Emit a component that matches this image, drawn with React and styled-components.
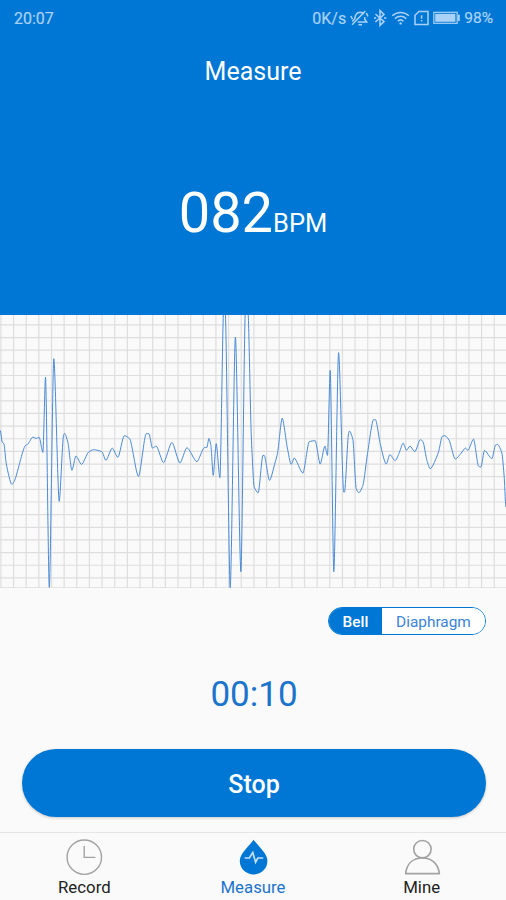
import { useState } from "react";
import styled, { createGlobalStyle } from "styled-components";

const BLUE = "#0077d5";

const GlobalStyle = createGlobalStyle`
  * {
    box-sizing: border-box;
  }
  body {
    margin: 0;
    background: #fafafa;
    font-family: Roboto, sans-serif;
  }
  button {
    font-family: inherit;
    border: none;
    padding: 0;
    background: none;
  }
  svg {
    display: block;
  }
`;

// [x, y] samples of the sound wave, in chart pixels
const SAMPLES = [
  [0, 115], [2, 126.7], [3.7, 128.3], [6, 148], [11.7, 169], [14, 166], [25.3, 130],
  [27.3, 129], [32.7, 121.7], [36, 123], [39, 122], [42.7, 137], [45.3, 61.7],
  [49.1, 272], [53.6, 43.3], [59, 186], [63.3, 120], [64.3, 118], [67.7, 127],
  [71.7, 155], [75.7, 140.7], [81.3, 149], [88.3, 136.7], [93.3, 134.3],
  [101.7, 136.3], [105.7, 145], [112, 132.7], [117.7, 142], [124, 120.3],
  [129.3, 123], [138.3, 161], [146, 118.3], [148.7, 118.3], [152.3, 132.7],
  [156, 130.7], [163.3, 147.3], [171.7, 127], [179.7, 147.7], [186.7, 132.3],
  [196.7, 146.3], [204, 132.3], [206.7, 132], [208.7, 123], [210.7, 130],
  [213, 160], [216, 128.3], [219.7, 162.3], [223.5, -8], [224.9, -8],
  [230, 272.3], [235.2, 21.7], [240.7, 256.3], [245.3, -8], [247.6, -8],
  [251, 118], [254, 171.7], [258, 177.3], [262.7, 140], [264, 140], [269.3, 165],
  [275, 146.7], [277.3, 138], [282, 102.7], [287, 131.7], [291, 149],
  [294, 142.7], [302.7, 157.7], [309, 126.3], [315, 125.3], [320, 148.7],
  [324.7, 130.7], [327.3, 140], [330, 55], [333.6, 256.3], [338.4, 37.3],
  [343.5, 176.7], [344.3, 176.7], [348.3, 118.3], [349.3, 115.7],
  [352.7, 124.3], [356, 173.3], [358.7, 177.3], [362.7, 170], [367.3, 138.3],
  [373.3, 104.3], [375.3, 104.3], [380, 128.3], [386, 148.7], [389.7, 139.3],
  [395, 145.3], [398.7, 138.3], [403, 127.7], [406.3, 135], [409.7, 130.7],
  [414.7, 136.3], [420, 124.3], [422.7, 126], [426.7, 145], [430, 153.3],
  [438.3, 136.7], [442, 121], [444.7, 120.3], [449, 125], [455, 143.7],
  [461, 137.7], [465.3, 132.7], [467.7, 135], [473.3, 123.7], [478.3, 150.7],
  [480.7, 151.7], [484.3, 135], [491.7, 143.3], [495.3, 129.7], [497.3, 129],
  [501.7, 137.7], [504, 161.7], [505.7, 191.7],
];

// smooth curve that never overshoots a sample
const toPath = (points) => {
  const slope = (a, b) => (b[1] - a[1]) / (b[0] - a[0]);
  const tangents = points.map((p, i) => {
    if (i === 0 || i === points.length - 1) return 0;
    const left = slope(points[i - 1], p);
    const right = slope(p, points[i + 1]);
    return left * right <= 0 ? 0 : (2 * left * right) / (left + right);
  });
  return points.reduce((path, [x, y], i) => {
    if (i === 0) return `M${x} ${y}`;
    const [px, py] = points[i - 1];
    const h = (x - px) / 4;
    return `${path}C${px + h} ${py + tangents[i - 1] * h} ${x - h} ${y - tangents[i] * h} ${x} ${y}`;
  }, "");
};

const GRID = 12.65;
const columns = Array.from({ length: 40 }, (_, i) => 0.9 + i * GRID);
const rows = Array.from({ length: 21 }, (_, i) => 9.9 + i * GRID);

const WaveChart = () => (
  <Chart viewBox="0 0 506 273">
    <g stroke="#dedede" strokeWidth="1.2">
      {columns.map((x) => (
        <line key={x} x1={x} x2={x} y1="0" y2="273" />
      ))}
      {rows.map((y) => (
        <line key={y} x1="0" x2="506" y1={y} y2={y} />
      ))}
      <line x1="0" x2="506" y1="272.8" y2="272.8" />
    </g>
    <path d={toPath(SAMPLES)} fill="none" stroke="#4a8ad6" strokeWidth="1" transform="translate(0.2 0.4)" />
  </Chart>
);

const StatusIcons = () => (
  <StatusSvg viewBox="0 0 118 20">
    {/* muted bell */}
    <g transform="translate(3.5 -0.4)">
      <path d="M2.8 13.8L5.4 11C5.6 7 7.4 4.8 10.6 4.6C12.4 4.6 13.6 5.4 14.4 6.6M15.2 9.4V11.6L17.2 14.4H8.2M9 17.2H12.6M2.6 17.2L15.8 3.4M1.2 8.4L3 11.6M16.8 5.6L18.4 8.8" />
    </g>
    {/* bluetooth */}
    <path d="M29.4 6L38 13.6L34 17.4V2.6L38 6.4L29.4 14M28 10H30.2M38 10H40.4" />
    {/* wifi */}
    <path d="M46.3 7.8C51 3.4 58.2 3.4 62.9 7.8M49 10.6C52.3 7.6 56.9 7.6 60.2 10.6M51.7 13.2C53.6 11.5 55.6 11.5 57.5 13.2" />
    <circle cx="54.6" cy="15.4" r="1.2" fill="currentColor" stroke="none" />
    {/* sim card */}
    <path d="M73 3.4H82V16.6H69V7.2ZM75.6 7.2V10.8M75.6 12V13.6" />
    {/* battery */}
    <rect x="87.8" y="4.3" width="23.4" height="11" strokeWidth="1.2" />
    <rect x="89.2" y="5.8" width="20.2" height="8" fill="currentColor" stroke="none" />
    <path d="M112.8 6.6V13" strokeWidth="2" />
  </StatusSvg>
);

const ClockIcon = () => (
  <svg width="38" height="38" viewBox="0 0 38 38" fill="none" stroke="#a2a2a2" strokeWidth="1.4">
    <circle cx="19.3" cy="19.2" r="17.2" />
    <path d="M19.2 8V19.4H30.4" />
  </svg>
);

const DropIcon = () => (
  <svg width="38" height="38" viewBox="0 0 38 38">
    <path
      d="M19.6 1.8C21.2 4.2 24.8 7.6 28.4 12.3C31.6 16.3 33.4 19.5 33.4 23C33.4 30.4 27.4 36.4 19.6 36.4C11.8 36.4 5.8 30.4 5.8 23C5.8 19.5 7.6 16.3 10.8 12.3C14.4 7.6 18 4.2 19.6 1.8Z"
      fill={BLUE}
    />
    <path d="M10.6 20H15.4L18.8 14.6L21.6 24.2L23.8 20H29.2" fill="none" stroke="#c4e0fa" strokeWidth="1.7" />
  </svg>
);

const PersonIcon = () => (
  <svg width="38" height="38" viewBox="0 0 38 38" fill="none" stroke="#a2a2a2" strokeWidth="1.6">
    <circle cx="19.4" cy="11.2" r="8.7" />
    <path d="M2.6 35.6C3.8 25.9 9.9 20 19.4 20C28.9 20 35.2 25.9 36.4 35.6Z" strokeLinejoin="round" />
  </svg>
);

const TABS = [
  { name: "Record", Icon: ClockIcon },
  { name: "Measure", Icon: DropIcon },
  { name: "Mine", Icon: PersonIcon },
];

const App = () => {
  const [mode, setMode] = useState("Bell");
  const [tab, setTab] = useState("Measure");

  return (
    <Screen>
      <GlobalStyle />
      <Header>
        <StatusBar>
          <span>20:07</span>
          <StatusRight>
            <span>0K/s</span>
            <StatusIcons />
            <Percent>98%</Percent>
          </StatusRight>
        </StatusBar>
        <Title>Measure</Title>
        <Reading>
          082<Unit>BPM</Unit>
        </Reading>
      </Header>
      <WaveChart />
      <Controls>
        <Switch>
          {["Bell", "Diaphragm"].map((name) => (
            <Option key={name} $active={mode === name} onClick={() => setMode(name)}>
              {name}
            </Option>
          ))}
        </Switch>
        <Timer>00:10</Timer>
        <StopButton>Stop</StopButton>
      </Controls>
      <TabBar>
        {TABS.map(({ name, Icon }) => (
          <Tab key={name} $active={tab === name} onClick={() => setTab(name)}>
            <Icon />
            {name}
          </Tab>
        ))}
      </TabBar>
    </Screen>
  );
};

const Screen = styled.div`
  display: flex;
  flex-direction: column;
  width: 506px;
  height: 900px;
  overflow: hidden;
`;

const Header = styled.header`
  display: flex;
  flex-direction: column;
  height: 315px;
  color: #fff;
  background: ${BLUE};
`;

const StatusBar = styled.div`
  display: flex;
  justify-content: space-between;
  align-items: center;
  height: 36px;
  padding: 0 13px 0 14px;
  font-size: 16px;
  color: #a9d2f6;
  -webkit-text-stroke: 0.2px;
`;

const StatusRight = styled.div`
  display: flex;
  align-items: center;
`;

const StatusSvg = styled.svg`
  width: 118px;
  height: 20px;
  fill: none;
  stroke: currentColor;
  stroke-width: 1.5;
`;

const Percent = styled.span`
  font-size: 15.5px;
`;

const Title = styled.h1`
  margin: 21px 0 0;
  font-size: 25px;
  font-weight: 400;
  line-height: 30px;
  text-align: center;
`;

const Reading = styled.div`
  margin-top: 93px;
  font-size: 56px;
  line-height: 66px;
  text-align: center;
`;

const Unit = styled.span`
  font-size: 25.5px;
`;

const Chart = styled.svg`
  width: 100%;
  height: 273px;
  flex-shrink: 0;
  background: #fafafa;
`;

const Controls = styled.main`
  display: flex;
  flex-direction: column;
  flex: 1;
  padding: 19px 20px 0 22px;
`;

const Switch = styled.div`
  display: flex;
  align-self: flex-end;
  width: 158px;
  height: 28px;
  border: 1px solid ${BLUE};
  border-radius: 14px;
  overflow: hidden;
`;

const Option = styled.button`
  flex: ${({ $active }) => ($active ? "0 0 53px" : "1")};
  padding-top: 2px;
  font-size: 15.4px;
  font-weight: ${({ $active }) => ($active ? 500 : 400)};
  color: ${({ $active }) => ($active ? "#fff" : "#3c84d6")};
  background: ${({ $active }) => ($active ? BLUE : "#fff")};
`;

const Timer = styled.div`
  margin-top: 39px;
  font-size: 35px;
  line-height: 42px;
  text-align: center;
  color: #1b74cc;
`;

const StopButton = styled.button`
  height: 68px;
  margin-top: 33px;
  padding-top: 2px;
  border-radius: 34px;
  font-size: 25px;
  font-weight: 500;
  color: #fff;
  background: ${BLUE};
  box-shadow: 0 1px 3px rgba(0, 0, 0, 0.2);
`;

const TabBar = styled.nav`
  display: grid;
  grid-template-columns: repeat(3, 1fr);
  height: 68px;
  border-top: 1px solid #e6e6e6;
`;

const Tab = styled.button`
  display: flex;
  flex-direction: column;
  align-items: center;
  gap: 1px;
  padding-top: 5px;
  font-size: 16.8px;
  line-height: 21px;
  color: ${({ $active }) => ($active ? "#1b74cc" : "#222")};
`;

export default App;
